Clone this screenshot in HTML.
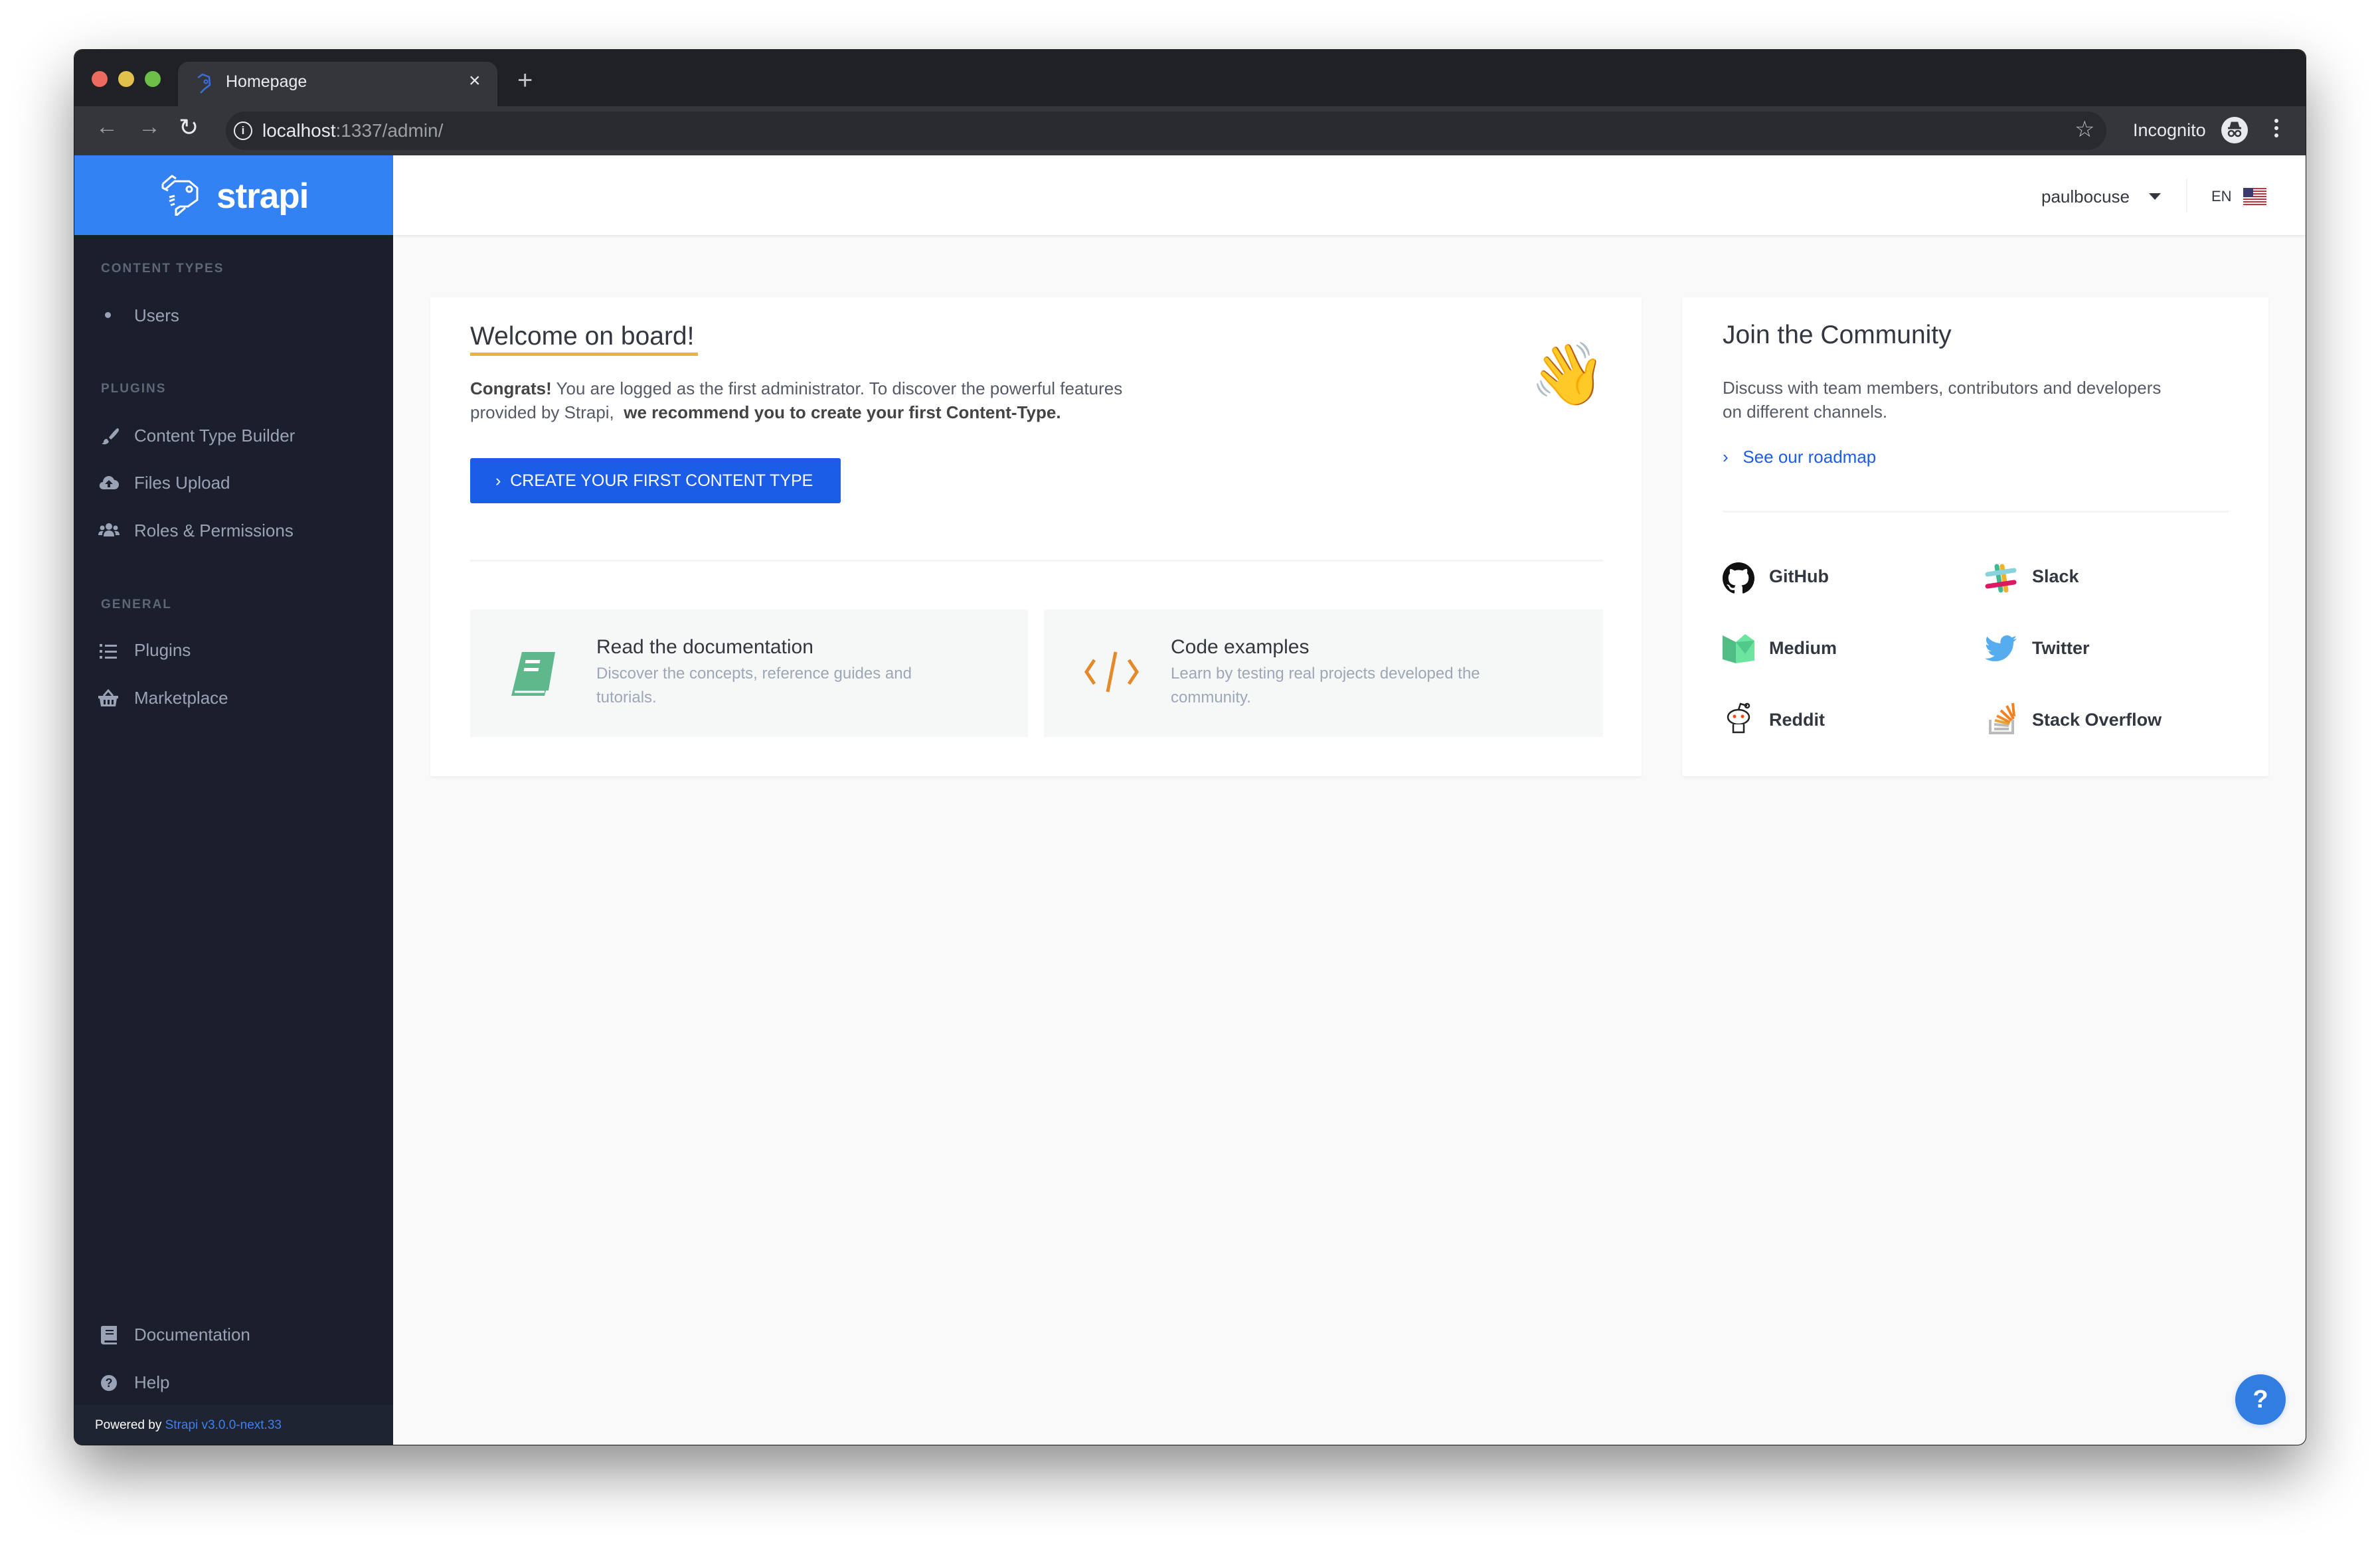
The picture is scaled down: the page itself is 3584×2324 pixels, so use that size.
<!DOCTYPE html>
<html><head><meta charset="utf-8"><style>
*{margin:0;padding:0;box-sizing:border-box}
body{width:3584px;height:2324px;background:#fff;font-family:"Liberation Sans",sans-serif;position:relative;overflow:hidden}
.abs{position:absolute}
.win{position:absolute;left:112px;top:75px;width:3360px;height:2101px;border-radius:12px;overflow:hidden;background:#f9f9fa;box-shadow:0 40px 90px rgba(0,0,0,.45),0 0 0 1px #222}
.side-t{color:#9aa3b5;font-size:26px}
.lbl{color:#5e6677;font-size:19px;font-weight:bold;letter-spacing:2px}
.ic{fill:#9aa3b5}
.comm{font-size:27px;font-weight:bold;color:#333740}
</style></head><body>
<div class="win">
 <div class="abs" style="left:0;top:0;width:3360px;height:85px;background:#202124"></div>
 <div class="abs" style="left:26px;top:32px;width:24px;height:24px;border-radius:50%;background:#ed6a5e"></div>
 <div class="abs" style="left:66px;top:32px;width:24px;height:24px;border-radius:50%;background:#e1c04c"></div>
 <div class="abs" style="left:106px;top:32px;width:24px;height:24px;border-radius:50%;background:#6cc04a"></div>
 <div class="abs" style="left:156px;top:18px;width:481px;height:70px;background:#35363a;border-radius:16px 16px 0 0"></div>
 <svg class="abs" style="left:178px;top:34px" width="34" height="34" viewBox="0 0 34 34"><path d="M8 8l7-5 10 4 1 12-8 6-6 6" fill="none" stroke="#3a6fd8" stroke-width="2.5"/><circle cx="20" cy="14" r="2.5" fill="none" stroke="#3a6fd8" stroke-width="2"/></svg>
 <div class="abs" style="left:228px;top:34px;color:#e8eaed;font-size:25px">Homepage</div>
 <div class="abs" style="left:594px;top:30px;color:#e8eaed;font-size:30px">×</div>
 <div class="abs" style="left:667px;top:24px;color:#bdc1c6;font-size:40px;font-weight:300">+</div>
 <div class="abs" style="left:0;top:85px;width:3360px;height:74px;background:#35363a"></div>
 <div class="abs" style="left:32px;top:97px;color:#9aa0a6;font-size:34px">←</div>
 <div class="abs" style="left:96px;top:97px;color:#9aa0a6;font-size:34px">→</div>
 <div class="abs" style="left:157px;top:96px;color:#e8eaed;font-size:36px">↻</div>
 <div class="abs" style="left:228px;top:93px;width:2832px;height:58px;border-radius:29px;background:#292a2d"></div>
 <div class="abs" style="left:240px;top:108px;width:28px;height:28px;border:2.5px solid #e8eaed;border-radius:50%;color:#e8eaed;font-size:17px;font-weight:bold;text-align:center;line-height:23px">i</div>
 <div class="abs" style="left:283px;top:106px;font-size:28px;color:#e8eaed">localhost<span style="color:#9aa0a6">:1337/admin/</span></div>
 <div class="abs" style="left:3012px;top:100px;color:#bdc1c6;font-size:34px">☆</div>
 <div class="abs" style="left:3100px;top:106px;color:#e8eaed;font-size:27px">Incognito</div>
 <div class="abs" style="left:3233px;top:101px;width:40px;height:40px;border-radius:50%;background:#e8eaed"></div>
 <svg class="abs" style="left:3233px;top:101px" width="40" height="40" viewBox="0 0 40 40"><path d="M10 17h20M14 16l2-7h8l2 7" stroke="#35363a" stroke-width="3" fill="#35363a"/><circle cx="15" cy="25" r="4" fill="none" stroke="#35363a" stroke-width="2.5"/><circle cx="25" cy="25" r="4" fill="none" stroke="#35363a" stroke-width="2.5"/></svg>
 <div class="abs" style="left:3313px;top:104px;width:6px;height:6px;border-radius:50%;background:#e8eaed;box-shadow:0 11px 0 #e8eaed,0 22px 0 #e8eaed"></div>

 <div class="abs" style="left:0;top:159px;width:480px;height:120px;background:#3382f4"></div>
 <svg class="abs" style="left:131px;top:188px" width="60" height="62" viewBox="0 0 60 62"><g fill="none" stroke="#fff" stroke-width="3" stroke-linejoin="round"><path d="M2 14L16 2l6 4M6 22l14-12 22 0 12 10 0 18-14 10-12 0-6 4v10l14-12"/><path d="M2 14l0 6 8 4"/><circle cx="42" cy="22" r="4"/><path d="M12 34l8-2M12 40l8-3M14 46l6-2"/></g></svg>
 <div class="abs" style="left:214px;top:190px;color:#fff;font-size:53px;font-weight:bold;letter-spacing:-1px">strapi</div>
 <div class="abs" style="left:0;top:279px;width:480px;height:1822px;background:#1b1f2c"></div>
 <div class="abs" style="left:0;top:2041px;width:480px;height:60px;background:#1f2433"></div>

 <div class="abs lbl" style="left:40px;top:319px">CONTENT TYPES</div>
 <div class="abs" style="left:46px;top:395px;width:9px;height:9px;border-radius:50%;background:#9aa3b5"></div>
 <div class="abs side-t" style="left:90px;top:385px">Users</div>
 <div class="abs lbl" style="left:40px;top:500px">PLUGINS</div>
 <svg class="abs" style="left:38px;top:567px" width="30" height="30" viewBox="0 0 30 30"><path class="ic" d="M27 3c-2 0-10 10-13 14l3 3c4-3 12-12 12-14 0-2-1-3-2-3zM11 19c-4 0-5 3-5 5 0 1-2 2-3 2 2 2 9 2 11-3z"/></svg>
 <div class="abs side-t" style="left:90px;top:566px">Content Type Builder</div>
 <svg class="abs" style="left:36px;top:638px" width="32" height="28" viewBox="0 0 32 28"><path class="ic" d="M8 24C3 24 1 20 2 17c1-3 3-4 5-4 0-5 4-9 9-9 4 0 7 3 8 6 4 0 7 3 7 7s-3 7-7 7z"/><path d="M16 10l-6 6h4v5h4v-5h4z" fill="#1b1f2c"/></svg>
 <div class="abs side-t" style="left:90px;top:637px">Files Upload</div>
 <svg class="abs" style="left:36px;top:711px" width="32" height="26" viewBox="0 0 32 26"><g class="ic"><circle cx="16" cy="7" r="5"/><circle cx="6" cy="9" r="3.5"/><circle cx="26" cy="9" r="3.5"/><path d="M8 22c0-6 3-9 8-9s8 3 8 9zM0 20c0-4 2-6 5-6h3c-2 2-2 4-2 6zM32 20c0-4-2-6-5-6h-3c2 2 2 4 2 6z"/></g></svg>
 <div class="abs side-t" style="left:90px;top:709px">Roles &amp; Permissions</div>
 <div class="abs lbl" style="left:40px;top:825px">GENERAL</div>
 <svg class="abs" style="left:38px;top:894px" width="28" height="24" viewBox="0 0 28 24"><g class="ic"><rect x="0" y="1" width="4" height="4"/><rect x="0" y="10" width="4" height="4"/><rect x="0" y="19" width="4" height="4"/><rect x="8" y="2" width="18" height="3"/><rect x="8" y="11" width="18" height="3"/><rect x="8" y="20" width="18" height="3"/></g></svg>
 <div class="abs side-t" style="left:90px;top:889px">Plugins</div>
 <svg class="abs" style="left:36px;top:963px" width="30" height="26" viewBox="0 0 30 26"><g class="ic"><path d="M0 10h30v4h-2l-2 12H4L2 14H0z"/><path d="M8 10l7-8 7 8" fill="none" stroke="#9aa3b5" stroke-width="3"/></g><g fill="#1b1f2c"><rect x="8" y="16" width="3" height="7"/><rect x="14" y="16" width="3" height="7"/><rect x="20" y="16" width="3" height="7"/></g></svg>
 <div class="abs side-t" style="left:90px;top:961px">Marketplace</div>
 <svg class="abs" style="left:40px;top:1922px" width="24" height="28" viewBox="0 0 24 28"><path class="ic" d="M3 0h21v22H6c-1 0-1 3 0 3h18v3H5c-3 0-5-1-5-4V3c0-2 1-3 3-3z"/><rect x="7" y="6" width="12" height="2" fill="#1b1f2c"/><rect x="7" y="11" width="12" height="2" fill="#1b1f2c"/></svg>
 <div class="abs side-t" style="left:90px;top:1920px">Documentation</div>
 <div class="abs" style="left:40px;top:1996px;width:24px;height:24px;border-radius:50%;background:#9aa3b5;color:#1b1f2c;font-size:18px;font-weight:bold;text-align:center;line-height:24px">?</div>
 <div class="abs side-t" style="left:90px;top:1992px">Help</div>
 <div class="abs" style="left:31px;top:2061px;font-size:19px;color:#fff">Powered by <span style="color:#3b82f0">Strapi v3.0.0-next.33</span></div>

 <div class="abs" style="left:480px;top:159px;width:2880px;height:120px;background:#fff;box-shadow:0 2px 4px rgba(0,0,0,.08)"></div>
 <div class="abs" style="left:2962px;top:206px;font-size:26px;color:#333740">paulbocuse</div>
 <div class="abs" style="left:3124px;top:216px;border-left:9px solid transparent;border-right:9px solid transparent;border-top:10px solid #333740"></div>
 <div class="abs" style="left:3180px;top:195px;width:2px;height:50px;background:#f2f2f2"></div>
 <div class="abs" style="left:3218px;top:208px;font-size:22px;color:#333740">EN</div>
 <svg class="abs" style="left:3266px;top:208px" width="35" height="26" viewBox="0 0 35 26"><rect width="35" height="26" fill="#fff"/><g fill="#c8313e"><rect y="0" width="35" height="2"/><rect y="4" width="35" height="2"/><rect y="8" width="35" height="2"/><rect y="12" width="35" height="2"/><rect y="16" width="35" height="2"/><rect y="20" width="35" height="2"/><rect y="24" width="35" height="2"/></g><rect width="15" height="14" fill="#3c3b6e"/></svg>

 <div class="abs" style="left:536px;top:373px;width:1824px;height:721px;background:#fff;border-radius:3px;box-shadow:0 2px 4px rgba(0,0,0,.05)"></div>
 <div class="abs" style="left:596px;top:410px;font-size:39px;color:#333740">Welcome on board!</div>
 <div class="abs" style="left:596px;top:456px;width:343px;height:5px;background:#e8b441"></div>
 <div class="abs" style="left:596px;top:492px;font-size:26px;line-height:36px;color:#555a66;width:1200px"><b style="color:#444">Congrats!</b> You are logged as the first administrator. To discover the powerful features<br>provided by Strapi, &nbsp;<b style="color:#444">we recommend you to create your first Content-Type.</b></div>
 <div class="abs" style="left:2192px;top:440px;font-size:92px;line-height:100px;font-family:'Noto Color Emoji',sans-serif">👋</div>
 <div class="abs" style="left:596px;top:615px;width:558px;height:68px;background:#1c5de7;border-radius:3px;color:#fff;font-size:25px;line-height:68px;padding-left:38px">› &nbsp;CREATE YOUR FIRST CONTENT TYPE</div>
 <div class="abs" style="left:596px;top:768px;width:1706px;height:3px;background:#f4f5f6"></div>
 <div class="abs" style="left:596px;top:843px;width:840px;height:192px;background:#f6f7f7"></div>
 <div class="abs" style="left:1460px;top:843px;width:842px;height:192px;background:#f6f7f7"></div>
 <svg class="abs" style="left:654px;top:905px" width="74" height="70" viewBox="0 0 74 70"><path d="M20 2h50l-10 58H6z" fill="#5eb88c"/><path d="M6 60h50l-2 8H4z" fill="#5eb88c"/><path d="M9 62h45" stroke="#fff" stroke-width="3"/><rect x="28" y="14" width="22" height="5" fill="#fff" transform="skewX(-10)"/><rect x="28" y="26" width="22" height="5" fill="#fff" transform="skewX(-10)"/></svg>
 <div class="abs" style="left:786px;top:883px;font-size:30px;color:#333740">Read the documentation</div>
 <div class="abs" style="left:786px;top:922px;font-size:24px;line-height:36px;color:#9ea7b8;width:600px">Discover the concepts, reference guides and<br>tutorials.</div>
 <svg class="abs" style="left:1520px;top:905px" width="84" height="64" viewBox="0 0 84 64"><g fill="none" stroke="#e58a2b" stroke-width="5"><path d="M16 14L4 32l12 18M68 14l12 18-12 18M48 2L36 62"/></g></svg>
 <div class="abs" style="left:1651px;top:883px;font-size:30px;color:#333740">Code examples</div>
 <div class="abs" style="left:1651px;top:922px;font-size:24px;line-height:36px;color:#9ea7b8;width:640px">Learn by testing real projects developed the<br>community.</div>

 <div class="abs" style="left:2421px;top:373px;width:883px;height:721px;background:#fff;border-radius:3px;box-shadow:0 2px 4px rgba(0,0,0,.05)"></div>
 <div class="abs" style="left:2482px;top:408px;font-size:39px;color:#333740">Join the Community</div>
 <div class="abs" style="left:2482px;top:491px;font-size:26px;line-height:36px;color:#555a66">Discuss with team members, contributors and developers<br>on different channels.</div>
 <div class="abs" style="left:2482px;top:598px;font-size:26px;color:#1c5de7">› &nbsp;&nbsp;See our roadmap</div>
 <div class="abs" style="left:2482px;top:694px;width:762px;height:3px;background:#f4f5f6"></div>
 <svg class="abs" style="left:2482px;top:772px" width="48" height="48" viewBox="0 0 16 16"><path fill="#111" d="M8 0C3.58 0 0 3.58 0 8c0 3.54 2.29 6.530 5.47 7.59.4.07.55-.17.55-.38v-1.34c-2.23.48-2.7-1.07-2.7-1.07-.36-.92-.89-1.17-.89-1.17-.73-.5.06-.49.06-.49.8.06 1.23.83 1.23.83.72 1.23 1.880.87 2.34.67.07-.52.28-.87.51-1.07-1.78-.2-3.65-.89-3.65-3.95 0-.87.31-1.59.82-2.15-.08-.2-.36-1.02.08-2.12 0 0 .67-.21 2.2.82A7.6 7.6 0 018 3.85c.68 0 1.36.09 2 .27 1.53-1.04 2.2-.82 2.2-.82.44 1.1.16 1.92.08 2.12.51.56.82 1.27.82 2.15 0 3.070-1.87 3.75-3.65 3.95.29.25.54.73.54 1.48v2.2c0 .21.15.46.55.38A8.01 8.01 0 0016 8c0-4.42-3.58-8-8-8z"/></svg>
 <div class="abs comm" style="left:2552px;top:778px">GitHub</div>
 <svg class="abs" style="left:2877px;top:772px" width="48" height="48" viewBox="0 0 48 48"><g stroke-width="7" stroke-linecap="round"><path d="M18 6l6 36" stroke="#3eb991"/><path d="M30 6l6 36" stroke="#ecb32d" transform="translate(-4 0)"/><path d="M4 18l40-6" stroke="#89d3df"/><path d="M4 32l40-6" stroke="#e01765" transform="translate(0 4)"/></g></svg>
 <div class="abs comm" style="left:2948px;top:778px">Slack</div>
 <svg class="abs" style="left:2482px;top:880px" width="48" height="44" viewBox="0 0 48 44"><path d="M0 2l20 10v32L0 38z" fill="#4fbd84"/><path d="M20 12L34 0l14 10v30L20 44z" fill="#6de5a0"/><path d="M20 12l14 18 14-20" fill="#52c88a"/></svg>
 <div class="abs comm" style="left:2552px;top:886px">Medium</div>
 <svg class="abs" style="left:2877px;top:882px" width="48" height="40" viewBox="0 0 24 20"><path fill="#55acee" d="M24 2.4a9.8 9.8 0 01-2.8.8A4.9 4.9 0 0023.3.4a9.9 9.9 0 01-3.1 1.2A4.9 4.9 0 0011.8 6 14 14 0 011.7.9a4.9 4.9 0 001.5 6.6A4.9 4.9 0 01.9 6.9v.1a4.9 4.9 0 004 4.8 4.9 4.9 0 01-2.2.1 4.9 4.9 0 004.6 3.4A9.9 9.9 0 010 17.3 14 14 0 007.5 19.5c9.1 0 14-7.5 14-14v-.6A10 10 0 0024 2.4z"/></svg>
 <div class="abs comm" style="left:2948px;top:886px">Twitter</div>
 <svg class="abs" style="left:2484px;top:983px" width="46" height="50" viewBox="0 0 46 50"><g fill="#fff" stroke="#222" stroke-width="2.5"><ellipse cx="22" cy="22" rx="16" ry="11"/><path d="M14 33v12h16V33"/><circle cx="35" cy="5" r="3"/><path d="M22 11l3-9 10 3" fill="none"/></g><circle cx="16" cy="21" r="2.5" fill="#ff4500"/><circle cx="28" cy="21" r="2.5" fill="#ff4500"/></svg>
 <div class="abs comm" style="left:2552px;top:994px">Reddit</div>
 <svg class="abs" style="left:2883px;top:983px" width="40" height="48" viewBox="0 0 40 48"><path d="M2 26v20h34V26" fill="none" stroke="#bcbbbb" stroke-width="4"/><g stroke-width="4"><path d="M8 40h22M8 33l22 2" stroke="#bcbbbb"/><path d="M9 27l22 5" stroke="#e8a33b"/><path d="M12 20l20 10" stroke="#f08b2c"/><path d="M18 12l16 15" stroke="#f48024"/><path d="M27 5l10 20" stroke="#f48024"/><path d="M36 1l2 20" stroke="#f48024"/></g></svg>
 <div class="abs comm" style="left:2948px;top:994px">Stack Overflow</div>

 <div class="abs" style="left:3254px;top:1995px;width:76px;height:76px;border-radius:50%;background:#327de0;color:#fff;font-size:38px;font-weight:bold;text-align:center;line-height:76px;box-shadow:0 2px 8px rgba(50,125,224,.25)">?</div>
</div>
</body></html>
